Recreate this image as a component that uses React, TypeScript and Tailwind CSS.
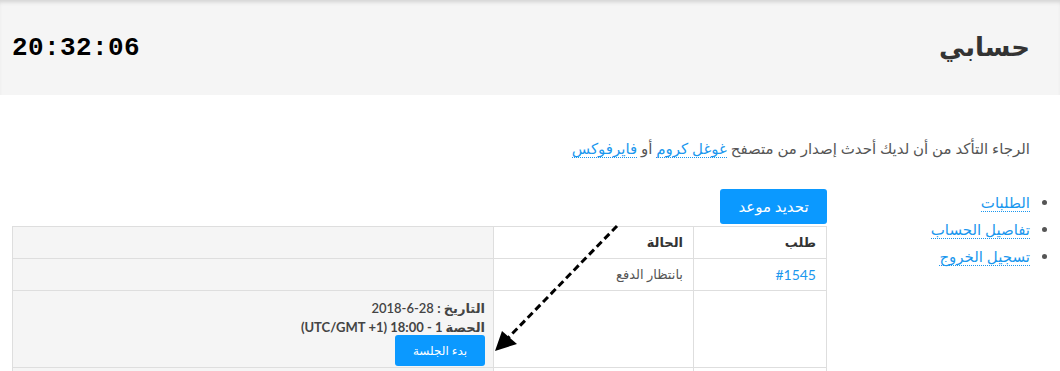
import React from 'react';

const link = 'text-[#1a97ee] border-b border-dotted border-[#1a97ee]';

export default function App() {
  return (
    <div dir="rtl" className="relative w-[1060px] h-[371px] overflow-hidden bg-white font-['Lato','DejaVu_Sans',sans-serif] text-[#555]">
      {/* Header */}
      <div className="h-[95px] bg-[#f5f5f5] shadow-[inset_0_4px_4px_-2px_rgba(0,0,0,0.15)] flex items-center justify-between pr-[30px] pl-3">
        <h1 className="text-[26px] font-bold text-[#333] leading-none -mt-[3px]">حسابي</h1>
        <div dir="ltr" className="font-['Liberation_Mono',monospace] font-bold text-[26px] tracking-[0.4px] text-black leading-none">20:32:06</div>
      </div>

      <div className="pr-[30px] pl-3">
        <p className="mt-[43px] text-[15px] leading-5">
          الرجاء التأكد من أن لديك أحدث إصدار من متصفح <a className={link}>غوغل كروم</a> أو <a className={link}>فايرفوكس</a>
        </p>

        <div className="flex mt-[31px]">
          {/* Sidebar */}
          <ul className="w-[203px] shrink-0 list-disc text-[15px] leading-[27px] marker:text-[#555]">
            <li><a className={link}>الطلبات</a></li>
            <li><a className={link}>تفاصيل الحساب</a></li>
            <li><a className={link}>تسجيل الخروج</a></li>
          </ul>

          {/* Main */}
          <div className="flex-1">
            <div className="flex">
              <button className="w-[107px] h-[35px] rounded-[3px] bg-[#0b99ff] text-white text-[15px]">تحديد موعد</button>
            </div>
            <table className="mt-[2px] w-full border-collapse border border-[#dedede] text-[13px]">
              <thead>
                <tr className="h-[32px]">
                  <th className="w-[133px] border border-[#dedede] px-[10px] text-right font-bold text-[#333]">طلب</th>
                  <th className="w-[200px] border border-[#dedede] px-[10px] text-right font-bold text-[#333]">الحالة</th>
                  <th className="border border-[#dedede] bg-[#f5f5f5]"></th>
                </tr>
              </thead>
              <tbody>
                <tr className="h-[32px]">
                  <td className="border border-[#dedede] px-[10px] text-[14px] text-[#1a97ee]">#1545</td>
                  <td className="border border-[#dedede] px-[10px] text-[13px] text-[#555]">بانتظار الدفع</td>
                  <td className="border border-[#dedede] bg-[#f5f5f5]"></td>
                </tr>
                <tr className="h-[76px]">
                  <td className="border border-[#dedede]"></td>
                  <td className="border border-[#dedede]"></td>
                  <td className="border border-[#dedede] bg-[#f5f5f5] px-[8px] pt-[8px] pb-[1px] align-top text-[#444] leading-[19px]">
                    <div><b>التاريخ :</b> <span dir="ltr" className="font-semibold">2018-6-28</span></div>
                    <div><b>الحصة 1 - 18:00 (UTC/GMT +1)</b></div>
                    <button className="mt-[-2px] w-[90px] h-[31px] rounded-[3px] bg-[#0b99ff] text-white text-[12px]">بدء الجلسة</button>
                  </td>
                </tr>
                <tr className="h-[32px]">
                  <td className="border border-[#dedede]"></td>
                  <td className="border border-[#dedede]"></td>
                  <td className="border border-[#dedede] bg-[#f5f5f5]"></td>
                </tr>
              </tbody>
            </table>
          </div>
        </div>
      </div>

      {/* Annotation arrow */}
      <svg className="absolute left-0 top-0 pointer-events-none" width="1060" height="371">
        <line x1="617" y1="226" x2="508" y2="338" stroke="black" strokeWidth="3" strokeDasharray="7 4" />
        <polygon points="495,351 502,331 517,344" fill="black" />
      </svg>
    </div>
  );
}
